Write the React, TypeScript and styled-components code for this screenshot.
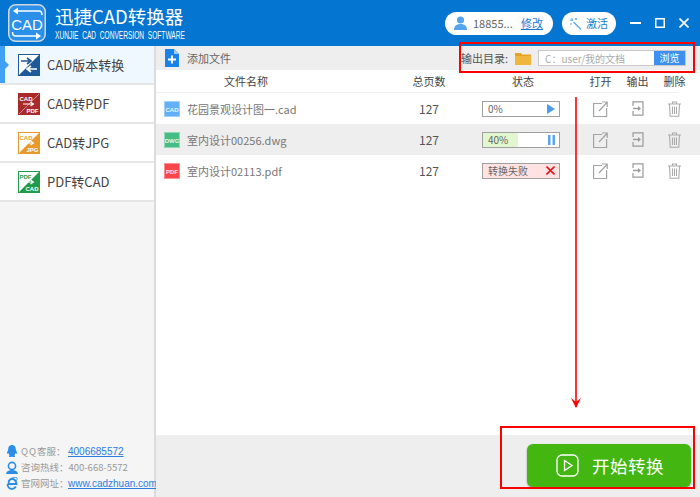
import styled, { createGlobalStyle } from "styled-components";

const GlobalStyle = createGlobalStyle`
  html, body { margin: 0; padding: 0; background: #fff; }
  * { box-sizing: border-box; }
`;

const Win = styled.div`
  position: relative;
  width: 700px;
  height: 497px;
  overflow: hidden;
  display: flex;
  flex-direction: column;
  font-family: "Noto Sans CJK SC", "Noto Sans", sans-serif;
  color: #444;
`;

/* header */
const Header = styled.header`
  height: 46px;
  flex: none;
  background: #0475d0;
  display: flex;
  align-items: center;
  padding-left: 8px;
  color: #fff;
`;
const Brand = styled.div`
  margin-left: 9px;
  display: flex;
  flex-direction: column;
  width: 132px;
  padding-bottom: 2px;
`;
const BrandName = styled.div`
  font-size: 18.5px;
  line-height: 26px;
  white-space: nowrap;
`;
const BrandSub = styled.div`
  font-family: "Liberation Sans", sans-serif;
  font-size: 10px;
  line-height: 10px;
  margin-top: 2px;
  white-space: pre;
  transform: scaleX(0.66);
  transform-origin: left;
`;
const HeaderRight = styled.div`
  margin-left: auto;
  display: flex;
  align-items: center;
  padding-right: 11px;
`;
const Pill = styled.div<{ $w: number; $ml: number; $pl: number }>`
  width: ${(p) => p.$w}px;
  margin-left: ${(p) => p.$ml}px;
  height: 23px;
  border-radius: 12px;
  background: #fff;
  display: flex;
  align-items: center;
  padding-left: ${(p) => p.$pl}px;
  font-size: 11px;
  color: #555;
  white-space: nowrap;
`;
const PillGrey = styled.span`
  margin-left: 6px;
  width: 40px;
  color: #666;
`;
const PillLink = styled.a`
  margin-left: 8px;
  color: #1a78d2;
  text-decoration: underline;
`;
const PillBlue = styled.span`
  margin-left: 4px;
  color: #1a78d2;
`;
const WinButtons = styled.div`
  margin-left: 14px;
  display: flex;
  align-items: center;
  gap: 14px;
`;

/* body */
const Body = styled.div`
  flex: 1;
  display: flex;
  min-height: 0;
`;
const Sidebar = styled.aside`
  width: 156px;
  flex: none;
  background: #f5f5f5;
  border-right: 2px solid #dcdcdc;
  display: flex;
  flex-direction: column;
`;
const NavItem = styled.div<{ $active?: boolean }>`
  position: relative;
  height: 39px;
  flex: none;
  display: flex;
  align-items: center;
  padding-left: 18px;
  gap: 7px;
  font-size: 13px;
  color: #444;
  background: ${(p) => (p.$active ? "#f0f8ff" : "#fff")};
  border-bottom: 2px solid #e6e6e6;
  ${(p) =>
    p.$active &&
    `&::before {
      content: "";
      position: absolute;
      left: 0; top: 0; bottom: 0;
      width: 5px;
      background: #3fa0f5;
    }
    &::after {
      content: "";
      position: absolute;
      left: 5px; top: 15px;
      border-left: 4px solid #3fa0f5;
      border-top: 4px solid transparent;
      border-bottom: 4px solid transparent;
    }`}
`;
const Contact = styled.div`
  margin-top: auto;
  padding: 0 0 6px 6px;
  display: flex;
  flex-direction: column;
`;
const ContactRow = styled.div`
  height: 16px;
  display: flex;
  align-items: center;
  gap: 3px;
  font-size: 9.5px;
  color: #9a9a9a;
  white-space: nowrap;
  svg { flex: none; }
`;
const ContactLabel = styled.span`
  width: 44px;
  flex: none;
  white-space: nowrap;
`;
const QQ = styled.span`
  letter-spacing: 1px;
`;
const ContactLink = styled.a`
  font-family: "Liberation Sans", sans-serif;
  font-size: 10px;
  color: #2a7de1;
  text-decoration: underline;
`;

/* main */
const Main = styled.main`
  flex: 1;
  min-width: 0;
  display: flex;
  flex-direction: column;
`;
const Toolbar = styled.div`
  height: 24px;
  flex: none;
  background: #eee;
  display: flex;
  align-items: center;
  padding: 0 14px 0 9px;
  font-size: 11px;
  color: #666;
`;
const AddLabel = styled.span`
  margin-left: 8px;
`;
const OutLabel = styled.span`
  margin-left: auto;
  color: #555;
  margin-right: 7px;
`;
const PathField = styled.div`
  margin-left: 7px;
  width: 148px;
  height: 16px;
  background: #fff;
  border: 1px solid #c8c8c8;
  display: flex;
  align-items: center;
  justify-content: space-between;
  padding-left: 6px;
  font-size: 10px;
  color: #aaa;
`;
const Browse = styled.div`
  width: 31px;
  height: 14px;
  background: #3d8ff0;
  color: #fff;
  font-size: 10px;
  line-height: 14px;
  text-align: center;
`;

const HeadRow = styled.div`
  height: 23px;
  flex: none;
  display: grid;
  grid-template-columns: 238px 70px 118px 37px 37px 22px;
  align-items: center;
  margin-right: 22px;
  border-bottom: 1px solid #eee;
  font-size: 11px;
  color: #444;
  text-align: center;
`;
const HeadCell = styled.div`
  white-space: nowrap;
`;
const NameHead = styled(HeadCell)`
  padding-right: 58px;
`;
const DeleteHead = styled(HeadCell)`
  width: 37px;
`;
const Row = styled.div<{ $shaded?: boolean }>`
  height: 31px;
  flex: none;
  display: grid;
  grid-template-columns: 238px 70px 118px 37px 37px 37px 7px;
  align-items: center;
  background: ${(p) => (p.$shaded ? "#eee" : "transparent")};
`;
const NameCell = styled.div`
  display: flex;
  align-items: center;
  padding-left: 8px;
  gap: 7px;
  font-size: 11px;
  color: #777;
  white-space: nowrap;
`;
const Pages = styled.div`
  font-size: 12px;
  color: #555;
  text-align: center;
`;
const ActionCell = styled.div`
  display: flex;
  justify-content: center;
  align-items: center;
`;
const Status = styled.div<{ $failed?: boolean }>`
  position: relative;
  margin-left: 18px;
  width: 78px;
  height: 16px;
  border: 1px solid #a0a0a0;
  background: ${(p) => (p.$failed ? "#ffe3e3" : "#fff")};
  display: flex;
  align-items: center;
  justify-content: space-between;
  padding: 0 4px 0 5px;
  font-size: 10px;
  color: #666;
`;
const Fill = styled.div`
  position: absolute;
  left: 0;
  top: 0;
  bottom: 0;
  background: #e2f7cf;
`;
const StatusText = styled.span`
  position: relative;
`;
const StatusIcon = styled.svg`
  position: relative;
  flex: none;
`;
const Spacer = styled.div`
  flex: 1;
`;
const Footer = styled.div`
  height: 62px;
  flex: none;
  background: #eee;
  display: flex;
  justify-content: flex-end;
  padding: 9px 9px 0 0;
`;
const StartButton = styled.button`
  width: 164px;
  height: 43px;
  border: 0;
  border-radius: 6px;
  background: #43b612;
  box-shadow: 0 1px 2px rgba(0, 0, 0, 0.35);
  color: #fff;
  font-family: inherit;
  font-size: 17.5px;
  letter-spacing: 0.5px;
  display: flex;
  align-items: center;
  padding: 0 0 0 29px;
  gap: 13px;
`;

/* annotations sit on top of the screenshot */
const Callout = styled.div<{ $x: number; $y: number; $w: number; $h: number }>`
  position: absolute;
  left: ${(p) => p.$x}px;
  top: ${(p) => p.$y}px;
  width: ${(p) => p.$w}px;
  height: ${(p) => p.$h}px;
  border: 2px solid #f00;
`;
const ArrowOverlay = styled.svg`
  position: absolute;
  left: 568px;
  top: 96px;
`;

function Logo() {
  return (
    <svg width="38" height="38" viewBox="0 0 38 38">
      <rect x="0.75" y="0.75" width="36.5" height="36.5" rx="7" fill="#2a90ea" stroke="#cfd8de" strokeWidth="1.5" />
      <path d="M8 7H31q3 0 3 4" fill="none" stroke="#fff" strokeWidth="1.5" />
      <path d="M5 7l5-3.500v7z" fill="#fff" />
      <text x="19" y="26" textAnchor="middle" fontFamily="Liberation Sans, sans-serif" fontSize="15" fill="#fff">CAD</text>
      <path d="M4.500 28q0 4 3 4H30" fill="none" stroke="#fff" strokeWidth="1.5" />
      <path d="M33 32l-5-3.500v7z" fill="#fff" />
    </svg>
  );
}

function ConvertIcon({ color, top, bottom, solid }: { color: string; top: string; bottom: string; solid?: boolean }) {
  return (
    <svg width="22" height="22" viewBox="0 0 22 22">
      <rect x="0.5" y="0.5" width="21" height="21" fill={solid ? color : "#fff"} stroke={color} />
      <path d="M21 1V21H1Z" fill={color} />
      {solid && <path d="M21 1 1 21" stroke="#fff" strokeOpacity="0.55" strokeWidth="0.8" />}
      <text x="1.5" y="7.500" fontFamily="Liberation Sans, sans-serif" fontWeight="bold" fontSize="6" fill={solid ? "#fff" : color}>{top}</text>
      <text x="20.500" y="20" textAnchor="end" fontFamily="Liberation Sans, sans-serif" fontWeight="bold" fontSize="6" fill="#fff">{bottom}</text>
      <path d="M5 11h10M12.500 9l3 2-3 2" fill="none" stroke="#fff" strokeWidth="1.1" />
    </svg>
  );
}

function FileBadge({ color, label }: { color: string; label: string }) {
  return (
    <svg width="16" height="16" viewBox="0 0 16 16">
      <rect width="16" height="16" fill={color} />
      <rect x="0.5" y="0.5" width="15" height="15" fill="none" stroke="#fff" strokeOpacity="0.4" />
      <text x="8" y="10.500" textAnchor="middle" fontFamily="Liberation Sans, sans-serif" fontWeight="bold" fontSize="6" fill="#fff" fillOpacity="0.9">{label}</text>
    </svg>
  );
}

function OpenIcon() {
  return (
    <svg width="15" height="16" viewBox="0 0 15 16" fill="none" stroke="#a3a3a3" strokeWidth="1.2">
      <path d="M9 2.500H.6v13h13V7" />
      <path d="M6 10 14 1.500M9 1h5.200v5" />
    </svg>
  );
}

function ExportIcon() {
  return (
    <svg width="12" height="15" viewBox="0 0 12 15" fill="none" stroke="#9a9a9a" strokeWidth="1.2">
      <path d="M1 5V.8h10v13.400H1V10" />
      <path d="M1 7.500h6" strokeWidth="1.4" />
      <path d="M6 5l3 2.500L6 10z" fill="#9a9a9a" stroke="none" />
    </svg>
  );
}

function TrashIcon() {
  return (
    <svg width="13" height="16" viewBox="0 0 13 16" fill="none" stroke="#ababab" strokeWidth="1.1">
      <path d="M0 3h13M4.500 3V1h4v2" />
      <path d="M1.500 3l.7 12.300h8.600L11.500 3" />
      <path d="M4.500 5.500v7.500M6.500 5.500v7.500M8.500 5.500v7.500" />
    </svg>
  );
}

function Actions() {
  return (
    <>
      <ActionCell><OpenIcon /></ActionCell>
      <ActionCell><ExportIcon /></ActionCell>
      <ActionCell><TrashIcon /></ActionCell>
      <div />
    </>
  );
}

export default function App() {
  return (
    <Win>
      <GlobalStyle />
      <Header>
        <Logo />
        <Brand>
          <BrandName>迅捷CAD转换器</BrandName>
          <BrandSub>{"XUNJIE  CAD  CONVERSION  SOFTWARE"}</BrandSub>
        </Brand>
        <HeaderRight>
          <Pill $w={108} $ml={0} $pl={9}>
            <svg width="13" height="14" viewBox="0 0 13 14">
              <circle cx="6.500" cy="4" r="3.600" fill="#55a5ee" />
              <path d="M0 14c0-4 2.500-6 6.500-6s6.500 2 6.500 6z" fill="#55a5ee" />
            </svg>
            <PillGrey>18855...</PillGrey>
            <PillLink>修改</PillLink>
          </Pill>
          <Pill $w={54} $ml={9} $pl={7}>
            <svg width="13" height="13" viewBox="0 0 13 13" fill="none" stroke="#55a5ee" strokeWidth="1.3">
              <path d="M4.500 5 12 12.500" />
              <path d="M3 1v3M1 3h3M7 1v2M6 2h2M1 7h2" strokeWidth="1" />
            </svg>
            <PillBlue>激活</PillBlue>
          </Pill>
          <WinButtons>
            <svg width="11" height="10" viewBox="0 0 11 10"><path d="M0 5h11" stroke="#fff" strokeWidth="2" /></svg>
            <svg width="10" height="10" viewBox="0 0 10 10"><rect x="0.75" y="0.75" width="8.500" height="8.500" fill="none" stroke="#fff" strokeWidth="1.5" /></svg>
            <svg width="10" height="10" viewBox="0 0 10 10"><path d="M.5.5l9 9M9.500.5l-9 9" stroke="#fff" strokeWidth="1.6" /></svg>
          </WinButtons>
        </HeaderRight>
      </Header>
      <Body>
        <Sidebar>
          <NavItem $active>
            <svg width="22" height="22" viewBox="0 0 22 22">
              <rect x="0.5" y="0.5" width="21" height="21" fill="#fff" stroke="#1e5a99" />
              <path d="M21 1V21H1Z" fill="#1e5a99" />
              <path d="M3 7h9M9 4l4 3-4 3" fill="none" stroke="#1e5a99" strokeWidth="1.6" />
              <path d="M19 15h-9M13 12l-4 3 4 3" fill="none" stroke="#fff" strokeWidth="1.6" />
            </svg>
            CAD版本转换
          </NavItem>
          <NavItem>
            <ConvertIcon color="#a82a2a" top="CAD" bottom="PDF" solid />
            CAD转PDF
          </NavItem>
          <NavItem>
            <ConvertIcon color="#e79a2a" top="CAD" bottom="JPG" />
            CAD转JPG
          </NavItem>
          <NavItem>
            <ConvertIcon color="#1f9b4a" top="PDF" bottom="CAD" />
            PDF转CAD
          </NavItem>
          <Contact>
            <ContactRow>
              <svg width="12" height="13" viewBox="0 0 12 13">
                <path d="M6 0C3.200 0 2.200 2.200 2.200 4.500L.8 8.300c.3.8 1 .4 1.500-.2.3 1 .8 1.700 1.300 2.300-1 .5-1 1.600.6 1.600.7 0 1.300-.3 1.800-.6.5.3 1.100.6 1.800.6 1.600 0 1.600-1.100.6-1.600.5-.6 1-1.300 1.300-2.300.5.6 1.200 1 1.500.2L9.800 4.500C9.800 2.200 8.800 0 6 0z" fill="#2a8de6" />
              </svg>
              <ContactLabel><QQ>QQ</QQ>客服：</ContactLabel>
              <ContactLink>4006685572</ContactLink>
            </ContactRow>
            <ContactRow>
              <svg width="12" height="13" viewBox="0 0 12 13">
                <circle cx="6" cy="5" r="3.600" fill="none" stroke="#2a8de6" strokeWidth="1.6" />
                <path d="M0 13c.5-3 2.800-4 6-4s5.500 1 6 4z" fill="#2a8de6" />
              </svg>
              <span>咨询热线：400-668-5572</span>
            </ContactRow>
            <ContactRow>
              <svg width="12" height="13" viewBox="0 0 12 13" fill="none" stroke="#2a8de6">
                <path d="M10.500 7H2.500C2.500 3.500 4 2 6 2s4 1.500 4.500 5zM10 9.500C9 11 7.500 12 6 12 3.500 12 1.500 10 1.500 7" strokeWidth="1.800" />
                <path d="M2 4C3.500 1.500 9.500-1 11 1c.5 1-.2 2-1 3" strokeWidth="0.9" />
              </svg>
              <ContactLabel>官网网址：</ContactLabel>
              <ContactLink>www.cadzhuan.com</ContactLink>
            </ContactRow>
          </Contact>
        </Sidebar>
        <Main>
          <Toolbar>
            <svg width="14" height="18" viewBox="0 0 14 18">
              <path d="M0 0h9l5 5v13H0z" fill="#1a82e8" />
              <path d="M9 0l5 5H9z" fill="#9ccbf7" />
              <path d="M7 6.500v8M3 10.500h8" stroke="#fff" strokeWidth="2" />
            </svg>
            <AddLabel>添加文件</AddLabel>
            <OutLabel>输出目录:</OutLabel>
            <svg width="16" height="13" viewBox="0 0 16 13">
              <path d="M0 1h6l1 1.500h9V13H0z" fill="#e5a326" />
              <path d="M0 4h16v9H0z" fill="#f0b63c" />
            </svg>
            <PathField>
              <span>C：user/我的文档</span>
              <Browse>浏览</Browse>
            </PathField>
          </Toolbar>
          <HeadRow>
            <NameHead>文件名称</NameHead>
            <HeadCell>总页数</HeadCell>
            <HeadCell>状态</HeadCell>
            <HeadCell>打开</HeadCell>
            <HeadCell>输出</HeadCell>
            <DeleteHead>删除</DeleteHead>
          </HeadRow>
          <Row>
            <NameCell><FileBadge color="#62b1f6" label="CAD" />花园景观设计图一.cad</NameCell>
            <Pages>127</Pages>
            <Status>
              <StatusText>0%</StatusText>
              <StatusIcon width="8" height="10" viewBox="0 0 8 10"><path d="M0 0l8 5-8 5z" fill="#4a9cf0" /></StatusIcon>
            </Status>
            <Actions />
          </Row>
          <Row $shaded>
            <NameCell><FileBadge color="#45bd84" label="DWG" />室内设计00256.dwg</NameCell>
            <Pages>127</Pages>
            <Status>
              <Fill style={{ width: "46%" }} />
              <StatusText>40%</StatusText>
              <StatusIcon width="7" height="10" viewBox="0 0 7 10"><path d="M0 0h2.500v10H0zM4.500 0H7v10H4.500z" fill="#5aa6f2" /></StatusIcon>
            </Status>
            <Actions />
          </Row>
          <Row>
            <NameCell><FileBadge color="#f9454b" label="PDF" />室内设计02113.pdf</NameCell>
            <Pages>127</Pages>
            <Status $failed>
              <StatusText>转换失败</StatusText>
              <StatusIcon width="9" height="9" viewBox="0 0 9 9"><path d="M.5.5l8 8M8.500.5l-8 8" stroke="#e8141c" strokeWidth="1.6" /></StatusIcon>
            </Status>
            <Actions />
          </Row>
          <Spacer />
          <Footer>
            <StartButton>
              <svg width="23" height="23" viewBox="0 0 23 23" fill="none" stroke="#fff" strokeWidth="1.3">
                <rect x="1" y="1" width="21" height="21" rx="5" />
                <path d="M8.500 6.500v10l7.500-5z" />
              </svg>
              开始转换
            </StartButton>
          </Footer>
        </Main>
      </Body>
      <Callout $x={459} $y={42} $w={236} $h={31} />
      <Callout $x={500} $y={426} $w={195} $h={63} />
      <ArrowOverlay width="16" height="316" viewBox="0 0 16 316">
        <path d="M8 1v310" stroke="#f00" strokeWidth="1.6" fill="none" />
        <path d="M3 302l5 10 5-10-5 4z" fill="#f00" />
      </ArrowOverlay>
    </Win>
  );
}
